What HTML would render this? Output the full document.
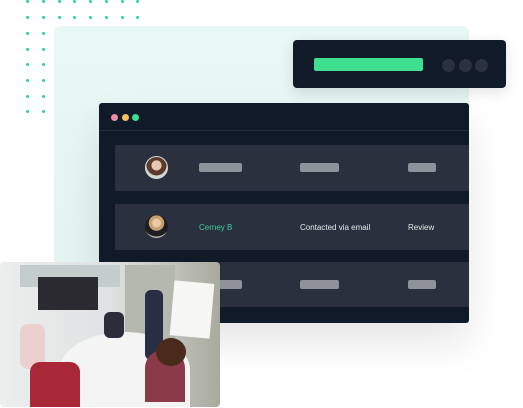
<!DOCTYPE html>
<html><head><meta charset="utf-8"><style>
*{margin:0;padding:0;box-sizing:border-box}
body{width:523px;height:408px;background:#fff;position:relative;overflow:hidden;font-family:"Liberation Sans",sans-serif}
.a{position:absolute}
.dot{position:absolute;width:3px;height:3px;border-radius:50%;background:#2ed3a3}
.bar{position:absolute;height:9px;border-radius:2px;background:#8e929a}
.row{position:absolute;left:115px;width:354px;background:#2a303d}
.t{position:absolute;font-size:8px;color:#e6e8eb;top:19px}
</style></head><body>
<div id="dots"></div>
<div class="a" style="left:54px;top:26px;width:415px;height:278px;background:linear-gradient(#e8f8f4,#e4f3ef);border-radius:6px"></div>
<div class="a" style="left:293px;top:40px;width:213px;height:48px;background:#111a28;border-radius:4px;box-shadow:0 4px 14px rgba(0,0,0,.12)">
 <div class="a" style="left:21px;top:18px;width:109px;height:13px;background:#3ee08f;border-radius:2px"></div>
 <div class="a" style="left:149px;top:19px;width:13px;height:13px;border-radius:50%;background:#2a3140"></div>
 <div class="a" style="left:166px;top:19px;width:13px;height:13px;border-radius:50%;background:#2a3140"></div>
 <div class="a" style="left:182px;top:19px;width:13px;height:13px;border-radius:50%;background:#2a3140"></div>
</div>
<div class="a" style="left:99px;top:103px;width:370px;height:220px;background:#111a28;border-radius:3px;box-shadow:0 20px 40px rgba(0,0,0,.1);overflow:hidden">
 <div class="a" style="left:0;top:27px;width:370px;height:1px;background:#232c3a"></div>
 <div class="a" style="left:12px;top:11px;width:7px;height:7px;border-radius:50%;background:#f08fa5"></div>
 <div class="a" style="left:23px;top:11px;width:7px;height:7px;border-radius:50%;background:#f5c25a"></div>
 <div class="a" style="left:33px;top:11px;width:7px;height:7px;border-radius:50%;background:#3ee08f"></div>
</div>
<div class="row" style="top:145px;height:46px">
 <div class="a" style="left:30px;top:11px;width:23px;height:23px;border-radius:50%;background:radial-gradient(circle at 50% 40%,#e8c8b0 0 30%,#5a3a2a 32% 60%,#cfd6d0 62%);border:1px solid #ddd"></div>
 <div class="bar" style="left:84px;top:18px;width:43px"></div>
 <div class="bar" style="left:185px;top:18px;width:39px"></div>
 <div class="bar" style="left:293px;top:18px;width:28px"></div>
</div>
<div class="row" style="top:204px;height:46px">
 <div class="a" style="left:30px;top:11px;width:23px;height:23px;border-radius:50%;background:radial-gradient(circle at 50% 35%,#e9c9a8 0 22%,#c9a070 24% 40%,#1e1e22 42% 70%,#b8b4b0 72%)"></div>
 <div class="t" style="left:84px;color:#3ecf9d">Cerney B</div>
 <div class="t" style="left:185px">Contacted via email</div>
 <div class="t" style="left:293px">Review</div>
</div>
<div class="row" style="top:262px;height:45px">
 <div class="bar" style="left:84px;top:18px;width:43px"></div>
 <div class="bar" style="left:185px;top:18px;width:39px"></div>
 <div class="bar" style="left:293px;top:18px;width:28px"></div>
</div>
<div class="a" style="left:0;top:262px;width:220px;height:145px;border-radius:4px;overflow:hidden;background:linear-gradient(90deg,#eceeee,#dfe2e2 50%,#a8aa9e)">
 <div class="a" style="left:20px;top:3px;width:100px;height:22px;background:#c4cccc"></div>
 <div class="a" style="left:38px;top:15px;width:60px;height:33px;background:#2a2a30"></div>
 <div class="a" style="left:125px;top:3px;width:50px;height:110px;background:#b4b8ae"></div>
 <div class="a" style="left:172px;top:20px;width:40px;height:55px;background:#f6f6f2;transform:rotate(5deg)"></div>
 <div class="a" style="left:60px;top:70px;width:130px;height:75px;border-radius:50% 50% 0 0;background:#f4f4f4"></div>
 <div class="a" style="left:145px;top:28px;width:18px;height:70px;background:#2a2e44;border-radius:6px"></div>
 <div class="a" style="left:104px;top:50px;width:20px;height:26px;background:#2c2c3a;border-radius:6px"></div>
 <div class="a" style="left:20px;top:62px;width:25px;height:45px;background:#ecd0d0;border-radius:8px"></div>
 <div class="a" style="left:30px;top:100px;width:50px;height:45px;background:#a82838;border-radius:10px 10px 0 0"></div>
 <div class="a" style="left:145px;top:88px;width:40px;height:52px;background:#8a3a48;border-radius:18px 18px 0 0"></div>
 <div class="a" style="left:156px;top:76px;width:30px;height:28px;background:#4a2a1a;border-radius:50%"></div>
</div>
<script>
var d=document.getElementById('dots'),h='';
var xs=[27,43,59,74,90,106,122,137];
[1,17].forEach(function(y){xs.forEach(function(x){h+='<div class="dot" style="left:'+(x-1.5)+'px;top:'+(y-1.5)+'px"></div>'})});
[33,49,64,80,96,111].forEach(function(y){[27,43].forEach(function(x){h+='<div class="dot" style="left:'+(x-1.5)+'px;top:'+(y-1.5)+'px"></div>'})});
d.innerHTML=h;
</script>
</body></html>
